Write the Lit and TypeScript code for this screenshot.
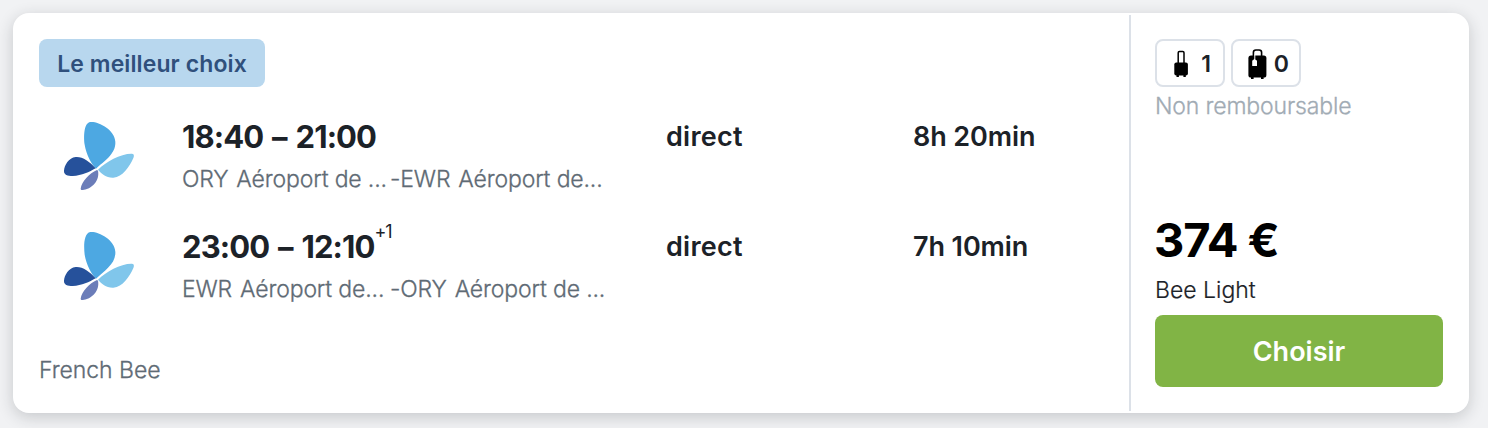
import { LitElement, html, css, svg, nothing } from "lit";
import { customElement, property } from "lit/decorators.js";

interface Stop {
  code: string;
  name: string;
}

interface Leg {
  times: string;
  plusDays?: string;
  from: Stop;
  to: Stop;
  stops: string;
  duration: string;
}

const butterfly = svg`
  <path fill="#4da8e2" d="M138 176 C124 162 109 134 104 104 C101 80 101 39 121 36 C143 33 194 58 196 95 C198 132 163 152 138 176 Z"/>
  <path fill="#26519b" d="M137 175 C119 154 96 139 77 141 C56 143 43 166 42 182 C41 194 53 198 68 198 C96 197 118 186 137 175 Z"/>
  <path fill="#80c6eb" d="M144 179 C168 155 213 130 246 131 C253 132 253 139 249 146 C239 168 218 201 190 203 C169 204 155 192 144 179 Z"/>
  <path fill="#6b7db9" d="M141 180 C118 189 95 216 92 236 C92 241 97 240 102 239 C126 236 150 211 144 182 Z"/>`;

@customElement("flight-leg")
class FlightLeg extends LitElement {
  @property({ attribute: false }) leg!: Leg;

  static styles = css`
    :host {
      display: grid;
      grid-template-columns: 143px 484px 247px 1fr;
      height: 84px;
    }
    .logo {
      display: block;
      width: 72px;
      height: 72px;
      margin: 7px 0 0 24px;
    }
    .times {
      display: flex;
      height: 48px;
      line-height: 48px;
      font-size: 31px;
      font-weight: 700;
      letter-spacing: -0.9px;
      word-spacing: 2.4px;
      white-space: nowrap;
    }
    .plus {
      font-size: 18px;
      font-weight: 400;
      line-height: 18px;
      letter-spacing: -1.1px;
    }
    .route {
      display: flex;
      line-height: 36px;
      font-size: 23px;
      font-weight: 300;
      -webkit-text-stroke: 0.3px currentColor;
      letter-spacing: -0.15px;
      color: #5f6b75;
      white-space: nowrap;
    }
    .from {
      width: 208px;
    }
    .code {
      margin-right: 8px;
    }
    .fact {
      font-size: 27px;
      font-weight: 600;
      line-height: 48px;
      white-space: nowrap;
    }
    .stops {
      letter-spacing: 0.25px;
    }
    .duration {
      letter-spacing: -0.1px;
    }
  `;

  render() {
    const { times, plusDays, from, to, stops, duration } = this.leg;
    return html`
      <svg class="logo" viewBox="39 30 216 216">${butterfly}</svg>
      <div>
        <div class="times">
          <span>${times}</span>
          ${plusDays ? html`<span class="plus">${plusDays}</span>` : nothing}
        </div>
        <div class="route">
          <span class="from"><span class="code">${from.code}</span>${from.name}</span>
          <span><span class="code">-${to.code}</span>${to.name}</span>
        </div>
      </div>
      <div class="fact stops">${stops}</div>
      <div class="fact duration">${duration}</div>
    `;
  }
}

@customElement("app-root")
class AppRoot extends LitElement {
  static styles = css`
    :host {
      display: block;
      box-sizing: border-box;
      height: 428px;
      padding: 13px 19px 15px 13px;
      background: #f1f2f4;
      font-family: Inter, "Liberation Sans", sans-serif;
      color: #1c2228;
      overflow: hidden;
    }
    .card {
      box-sizing: border-box;
      display: flex;
      height: 400px;
      padding: 2px;
      border-radius: 16px;
      background: #fff;
      box-shadow: 0 4px 16px rgba(28, 34, 40, 0.2);
    }
    .trip {
      width: 1114px;
      box-sizing: border-box;
      padding: 24px 0 0 24px;
    }
    .badge {
      display: inline-block;
      box-sizing: border-box;
      width: 226px;
      height: 48px;
      border-radius: 8px;
      background: #b8d7ee;
      color: #30507c;
      font-size: 23px;
      font-weight: 600;
      letter-spacing: 0.1px;
      line-height: 50px;
      text-align: center;
      white-space: nowrap;
      vertical-align: top;
    }
    .legs {
      display: grid;
      gap: 26px;
      margin-top: 26px;
    }
    .carrier {
      margin-top: 45px;
      line-height: 36px;
      font-size: 23px;
      font-weight: 300;
      -webkit-text-stroke: 0.3px currentColor;
      letter-spacing: -0.05px;
      color: #5f6b75;
    }
    .offer {
      flex: 1;
      display: flex;
      flex-direction: column;
      box-sizing: border-box;
      border-left: 2px solid #dce1e8;
      padding: 24px;
    }
    .bags {
      display: flex;
      gap: 6px;
    }
    .bag {
      display: flex;
      align-items: center;
      justify-content: space-between;
      box-sizing: border-box;
      width: 70px;
      height: 48px;
      padding: 1px 10px 0 14px;
      border: 2px solid #dce1e8;
      border-radius: 8px;
      font-size: 23px;
      font-weight: 600;
    }
    .bag.cabin {
      padding-right: 12px;
    }
    .bag svg {
      width: 22px;
      height: 32px;
    }
    .refund {
      line-height: 36px;
      font-size: 23px;
      font-weight: 300;
      -webkit-text-stroke: 0.3px currentColor;
      letter-spacing: -0.15px;
      color: #a1abb4;
      margin-top: 1px;
    }
    .price {
      margin-top: auto;
      margin-left: -1px;
      font-size: 47px;
      font-weight: 700;
      letter-spacing: -1.1px;
      line-height: 56px;
      color: #000;
    }
    .fare {
      margin-top: 4px;
      font-size: 23px;
      font-weight: 300;
      -webkit-text-stroke: 0.2px currentColor;
      line-height: 36px;
    }
    .choose {
      height: 72px;
      margin-top: 7px;
      border: 0;
      border-radius: 8px;
      background: #81b445;
      color: #fff;
      font: 600 27px Inter, "Liberation Sans", sans-serif;
      padding: 1px 0 0;
    }
  `;

  private legs: Leg[] = [
    {
      times: "18:40 – 21:00",
      from: { code: "ORY", name: "Aéroport de ..." },
      to: { code: "EWR", name: "Aéroport de..." },
      stops: "direct",
      duration: "8h 20min",
    },
    {
      times: "23:00 – 12:10",
      plusDays: "+1",
      from: { code: "EWR", name: "Aéroport de..." },
      to: { code: "ORY", name: "Aéroport de ..." },
      stops: "direct",
      duration: "7h 10min",
    },
  ];

  render() {
    return html`
      <article class="card">
        <section class="trip">
          <span class="badge">Le meilleur choix</span>
          <div class="legs">
            ${this.legs.map((leg) => html`<flight-leg .leg=${leg}></flight-leg>`)}
          </div>
          <div class="carrier">French Bee</div>
        </section>
        <aside class="offer">
          <div class="bags">
            <span class="bag cabin">
              <svg viewBox="0 0 22 32">
                <path d="M7.2 15V4.8q0-1.2 1.2-1.2h3.4q1.2 0 1.2 1.2V15" fill="none" stroke="#000" stroke-width="1.5" />
                <rect x="3.3" y="14.6" width="13.6" height="13" rx="2" />
                <path d="M5.5 27h2.4v2H5.5zM12.4 27h2.4v2h-2.4z" />
              </svg>
              <span>1</span>
            </span>
            <span class="bag">
              <svg viewBox="0 0 22 32">
                <path d="M6.4 8V4.5Q6.4 2 8.9 2h3.2q2.5 0 2.5 2.5V8" fill="none" stroke="#000" stroke-width="1.6" />
                <rect x="1.4" y="7.6" width="18" height="22" rx="2.6" />
                <path d="M4 29h2.6v2H4zM14 29h2.6v2H14z" />
                <path d="M7.8 6.5V11" stroke="#fff" stroke-width="1" />
                <path d="M5.2 12.8L7.6 10.8L10 12.8V18H5.2Z" fill="#fff" />
              </svg>
              <span>0</span>
            </span>
          </div>
          <div class="refund">Non remboursable</div>
          <div class="price">374 €</div>
          <div class="fare">Bee Light</div>
          <button class="choose">Choisir</button>
        </aside>
      </article>
    `;
  }
}
